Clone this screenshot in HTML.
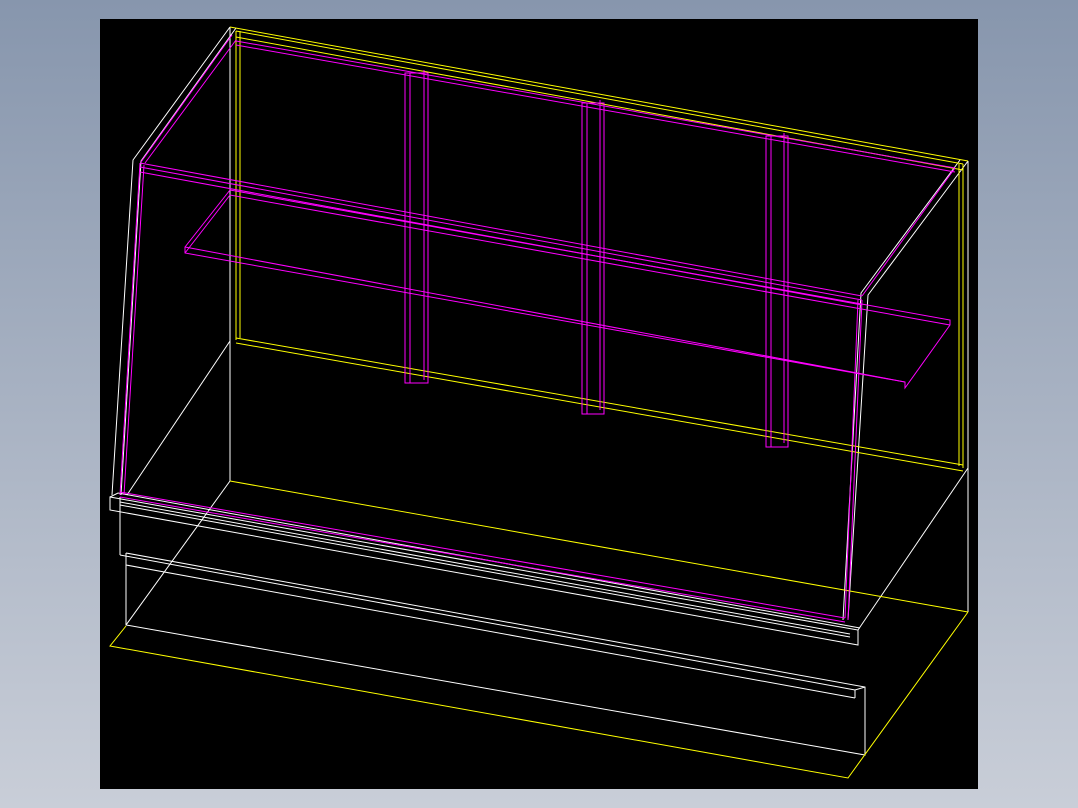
<!DOCTYPE html>
<html><head><meta charset="utf-8"><style>
html,body{margin:0;padding:0;width:1078px;height:808px;overflow:hidden;background:linear-gradient(#8796ad,#c9ced8);}
svg{position:absolute;left:0;top:0}
</style></head><body>
<svg width="1078" height="808" viewBox="0 0 1078 808" xmlns="http://www.w3.org/2000/svg">
<rect x="100" y="19" width="878" height="770" fill="#000"/>
<g fill="none" stroke-width="1">
<g stroke="#fff">
<polyline points="230,27 133,160 112,495"/>
<polyline points="236,28 141,161 121,495"/>
<line x1="230" y1="27" x2="230" y2="481"/>
<polyline points="968,161 868,295 848,620"/>
<polyline points="960,160 861,293 843,620"/>
<line x1="968" y1="161" x2="968" y2="612"/>
<line x1="230" y1="341" x2="127" y2="495"/>
<line x1="230" y1="481" x2="126" y2="625"/>
<line x1="968" y1="468" x2="858" y2="630"/>
<polygon points="110,497 858,630 858,645 110,510"/>
<line x1="120" y1="497" x2="120" y2="510"/>
<line x1="120" y1="510" x2="120" y2="555"/>
<polyline points="110,497 118,493 860,628"/>
<polyline points="126,553 865,687 865,755 126,625 126,553"/>
<polyline points="120,555 855,690 865,687"/>
<line x1="855" y1="690" x2="855" y2="698"/>
<line x1="126" y1="565" x2="855" y2="698"/>
<line x1="120" y1="502" x2="850" y2="634"/>
<line x1="120" y1="505" x2="850" y2="637"/>
</g>
<g stroke="#ff0">
<line x1="230" y1="27" x2="968" y2="161"/>
<line x1="236" y1="31" x2="963" y2="164"/>
<line x1="236" y1="37" x2="963" y2="170"/>
<line x1="236" y1="31" x2="236" y2="340"/>
<line x1="240" y1="31" x2="240" y2="338"/>
<line x1="963" y1="164" x2="963" y2="468"/>
<line x1="959" y1="164" x2="959" y2="466"/>
<line x1="236" y1="338" x2="963" y2="465"/>
<line x1="236" y1="343" x2="963" y2="471"/>
<line x1="230" y1="481" x2="968" y2="612"/>
<polyline points="126,626 110,646 848,778 968,612"/>
</g>
<g stroke="#f0f">
<line x1="236" y1="41" x2="955" y2="168"/>
<line x1="236" y1="45" x2="955" y2="172"/>
<polyline points="232,35 141,162"/>
<polyline points="236,40 145,163"/>
<line x1="140" y1="163" x2="862" y2="296"/>
<line x1="140" y1="167" x2="862" y2="300"/>
<line x1="140" y1="172" x2="862" y2="305"/>
<line x1="955" y1="168" x2="862" y2="296"/>
<line x1="140" y1="163" x2="120" y2="495"/>
<line x1="144" y1="165" x2="124" y2="495"/>
<line x1="862" y1="300" x2="848" y2="620"/>
<line x1="858" y1="300" x2="845" y2="618"/>
<line x1="120" y1="492" x2="845" y2="618"/>
<line x1="120" y1="497" x2="845" y2="622"/>
<polygon points="230,190 950,320 950,325 905,388 905,382 185,253 185,247"/>
<polyline points="185,253 230,195 950,325"/>
<line x1="185" y1="247" x2="905" y2="382"/>
<rect x="405" y="73" width="23" height="310"/>
<line x1="410" y1="73" x2="410" y2="383"/>
<line x1="424" y1="70" x2="424" y2="380"/>
<rect x="582" y="103" width="22" height="311"/>
<line x1="587" y1="103" x2="587" y2="414"/>
<line x1="600" y1="100" x2="600" y2="410"/>
<rect x="766" y="136" width="22" height="311"/>
<line x1="771" y1="136" x2="771" y2="447"/>
<line x1="784" y1="133" x2="784" y2="443"/>
</g>
</g>
</svg>
</body></html>
